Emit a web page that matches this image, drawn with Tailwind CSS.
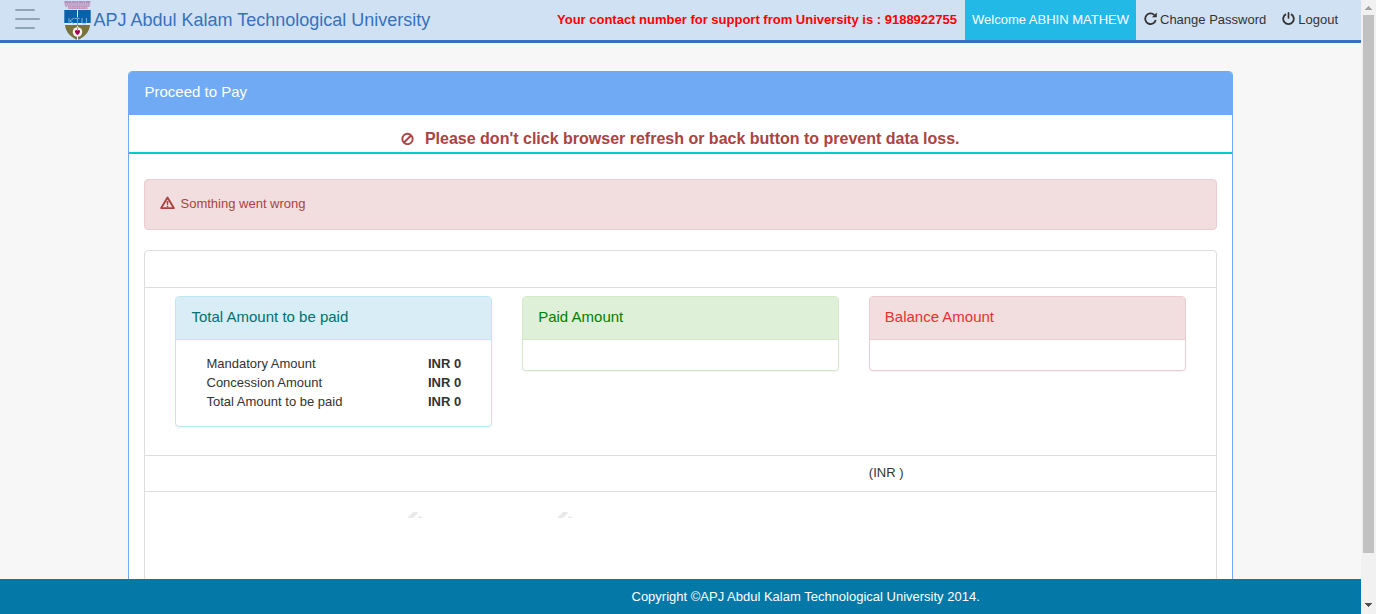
<!DOCTYPE html>
<html lang="en">
<head>
<meta charset="utf-8">
<title>Proceed to Pay</title>
<script src="https://cdn.jsdelivr.net/npm/@tailwindcss/browser@4"></script>
</head>
<body class="flex h-[614px] w-[1376px] overflow-hidden bg-[#f7f7f7] font-['Liberation_Sans',Arial,sans-serif] text-[13px] leading-[19px] text-[#333]">
<div class="flex h-full w-[1361px] flex-col">
  <header class="flex h-[43px] shrink-0 border-b-3 border-[#3871bb] bg-[#d0e1f3]">
    <button class="ml-[15px] mt-[9px] flex h-5 w-[25px] flex-col justify-between" aria-label="Menu">
      <span class="h-[2px] w-5 rounded-full bg-[#8fa5b5]"></span>
      <span class="h-[2px] w-[25px] rounded-full bg-[#8fa5b5]"></span>
      <span class="h-[2px] w-5 rounded-full bg-[#8fa5b5]"></span>
    </button>
    <svg class="ml-6 mt-px h-[39px] w-[27px]" viewBox="0 0 27 39">
      <path d="M.5 0H26.500V4.500H24V8H4V5H.5Z" fill="#cdb9d6"/>
      <path d="M.5 1H26.500" stroke="#8e6da8" stroke-width="1.200" stroke-dasharray="4 .5 2 .7"/>
      <path d="M1 3H26" stroke="#b293bd" stroke-width="1.600" stroke-dasharray="1.200 .7"/>
      <path d="M1.500 5.200H26" stroke="#ba86ad" stroke-width="1.300" stroke-dasharray="1.600 .6"/>
      <path d="M4.500 7.200H22.500" stroke="#b680ab" stroke-width="1.300" stroke-dasharray="1.200 .5"/>
      <path d="M.3 9H26.700V22H.3Z" fill="#0762ae"/>
      <path d="M.8 22.700H26.200" stroke="#e9f0ee" stroke-width="1.400"/>
      <path d="M1 24H26C25.500 31 20 36.500 13.500 39C7 36.500 1.500 31 1 24Z" fill="#78733a"/>
      <path d="M13.500 8.500V39" stroke="#f0f3f5" stroke-width="1"/>
      <path d="M5 17v6M10 17l-4 3 4 3M10.500 17.500h5M18 17v4q0 2 2 2t2.500-2v-4" fill="none" stroke="#8db9dc" stroke-width=".9"/>
      <path d="M13.500 16v9" stroke="#ae4a8a" stroke-width=".7"/>
      <circle cx="13.500" cy="31" r="4.800" fill="#f5f0ed"/>
      <path d="M13.500 34c-3-2-3.200-5-1.200-5q1 0 1.200 1 .2-1 1.200-1c2 0 1.800 3-1.200 5Z" fill="#a00052"/>
      <path d="M13.500 26.500v3" stroke="#a56b72" stroke-width=".8"/>
    </svg>
    <h1 class="ml-[2.500px] text-lg leading-10 text-[#3871bb]">APJ Abdul Kalam Technological University</h1>
    <nav class="ml-auto mr-[23px] flex leading-10">
      <strong class="mr-2 text-[#f00]">Your contact number for support from University is : 9188922755</strong>
      <span class="w-[171px] bg-[#22b9e6] pl-[7px] text-white">Welcome ABHIN MATHEW</span>
      <a class="ml-[7.500px] flex">
        <svg class="mr-[3.500px] mt-3 size-[13px]" viewBox="0 0 13 13"><path d="M10.300 3A5.300 5.300 0 1 0 11.700 8" fill="none" stroke="#333" stroke-width="1.800"/><path d="M12.800.4V5.200H8Z" fill="#333"/></svg>
        Change Password</a>
      <a class="ml-[15.500px] flex">
        <svg class="mr-[3.500px] mt-3 size-[13px]" viewBox="0 0 13 13"><path d="M4 2.100a5.300 5.300 0 1 0 5 0" fill="none" stroke="#333" stroke-width="1.800"/><path d="M6.500.9V6" stroke="#333" stroke-width="1.700" stroke-linecap="round"/></svg>
        Logout</a>
    </nav>
  </header>

  <main class="min-h-0 flex-1 overflow-hidden pt-7">
    <section class="ml-32 h-[600px] w-[1105px] rounded border border-[#70aaf5] bg-white">
      <h2 class="h-[43px] rounded-t-[3px] bg-[#70aaf5] pl-[15.500px] pt-[10px] text-[15px] leading-5 text-white">Proceed to Pay</h2>
      <div class="flex h-[39px] justify-center border-b-2 border-[#0cc] pr-[0.500px] pt-[13px] text-base font-bold leading-[22px] text-[#a94442]">
        <svg class="mr-[11px] mt-1 size-[13px]" viewBox="0 0 13 13" fill="none" stroke="#a94442" stroke-width="1.900"><circle cx="6.500" cy="7" r="5.200"/><path d="M3 10.500L10 3.500"/></svg>
        Please don't click browser refresh or back button to prevent data loss.
      </div>
      <div class="mx-[15px] mt-[25px] flex h-[51px] rounded border border-[#ebccd1] bg-[#f2dede] pl-[14.500px] pt-[14px] text-[#a94442]">
        <svg class="mr-[6px] mt-0.5 h-[14px] w-[15px]" viewBox="0 0 15 14"><path d="M7.500 1.500L13.800 12.100H1.200Z" fill="none" stroke="#a94442" stroke-width="1.900" stroke-linejoin="round"/><path d="M6.500 4.900H8.500L8 9H7ZM6.700 9.700H8.300V11.200H6.700Z" fill="#a94442"/></svg>
        Somthing went wrong
      </div>
      <div class="mx-[15px] mt-5 h-[440px] rounded border border-[#ddd]">
        <div class="h-[37px] border-b border-[#ddd]"></div>
        <div class="flex h-[168px] items-start gap-[30px] border-b border-[#ddd] pl-[30px] pt-2">
          <article class="h-[131px] w-[317px] rounded border border-[#bce8f1] bg-white shadow-[0_1px_1px_rgba(0,0,0,0.05)]">
            <h3 class="h-[43px] rounded-t-[3px] border-b border-[#bce8f1] bg-[#d9edf7] pl-[15.500px] pt-[10px] text-[15px] leading-5 text-[#007070]">Total Amount to be paid</h3>
            <dl class="grid grid-cols-[221.500px_1fr] pl-[30.500px] pt-[14px]">
              <dt>Mandatory Amount</dt><dd class="font-bold">INR 0</dd>
              <dt>Concession Amount</dt><dd class="font-bold">INR 0</dd>
              <dt>Total Amount to be paid</dt><dd class="font-bold">INR 0</dd>
            </dl>
          </article>
          <article class="h-[75px] w-[317px] rounded border border-[#d6e9c6] bg-white shadow-[0_1px_1px_rgba(0,0,0,0.05)]">
            <h3 class="h-[43px] rounded-t-[3px] border-b border-[#d6e9c6] bg-[#dff0d8] pl-[15.200px] pt-[10px] text-[15px] leading-5 text-[#008000]">Paid Amount</h3>
          </article>
          <article class="h-[75px] w-[317px] rounded border border-[#ebccd1] bg-white shadow-[0_1px_1px_rgba(0,0,0,0.05)]">
            <h3 class="h-[43px] rounded-t-[3px] border-b border-[#ebccd1] bg-[#f2dede] pl-[14.800px] pt-[10px] text-[15px] leading-5 text-[#e83030]">Balance Amount</h3>
          </article>
        </div>
        <div class="h-9 border-b border-[#ddd] pl-[723.800px] pt-[7px]">(INR )</div>
        <div class="flex gap-[134px] pl-[262px] pt-[10px]">
          <svg class="h-4 w-4" viewBox="0 0 16 16"><path d="M0 16L1 15 3 13 6 10H10L11 11 9 13 6 16ZM11 16V15L13 14 16 16Z" fill="#e9e9e9"/><path d="M13 0L16 3" stroke="#f7f7f7" stroke-width=".7"/></svg>
          <svg class="h-4 w-4" viewBox="0 0 16 16"><path d="M0 16L1 15 3 13 6 10H10L11 11 9 13 6 16ZM11 16V15L13 14 16 16Z" fill="#e9e9e9"/><path d="M13 0L16 3" stroke="#f7f7f7" stroke-width=".7"/></svg>
        </div>
      </div>
    </section>
  </main>

  <footer class="h-[35px] shrink-0 bg-[#0478a7] pl-[631.500px] pt-2 text-white">Copyright ©APJ Abdul Kalam Technological University 2014.</footer>
</div>
<aside class="flex h-full w-[15px] flex-col items-center bg-[#f1f1f1]">
  <svg class="h-[15px] w-[15px] shrink-0" viewBox="0 0 15 15" shape-rendering="crispEdges"><path d="M4 10L7.500 6L11 10Z" fill="#a3a3a3"/></svg>
  <div class="h-[538px] w-[11px] bg-[#c1c1c1]"></div>
  <svg class="mt-auto h-[15px] w-[15px] shrink-0" viewBox="0 0 15 15" shape-rendering="crispEdges"><path d="M4 4L7.500 8L11 4Z" fill="#505050"/></svg>
</aside>
</body>
</html>
